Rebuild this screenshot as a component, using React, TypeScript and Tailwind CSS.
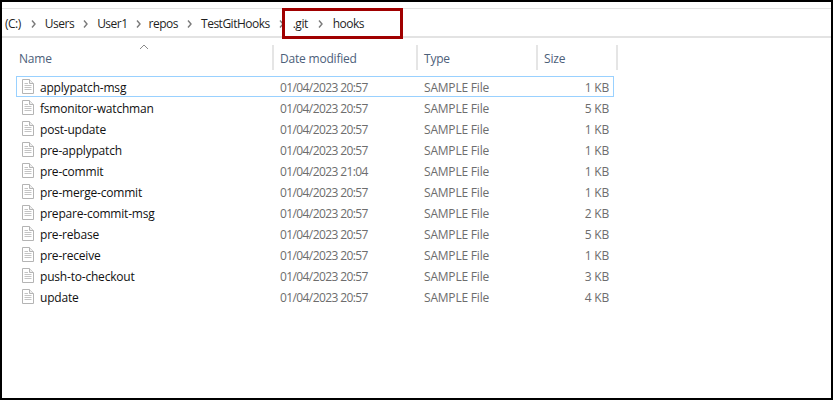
const files: [string, string, string][] = [
  ["applypatch-msg", "01/04/2023 20:57", "1 KB"],
  ["fsmonitor-watchman", "01/04/2023 20:57", "5 KB"],
  ["post-update", "01/04/2023 20:57", "1 KB"],
  ["pre-applypatch", "01/04/2023 20:57", "1 KB"],
  ["pre-commit", "01/04/2023 21:04", "1 KB"],
  ["pre-merge-commit", "01/04/2023 20:57", "1 KB"],
  ["prepare-commit-msg", "01/04/2023 20:57", "2 KB"],
  ["pre-rebase", "01/04/2023 20:57", "5 KB"],
  ["pre-receive", "01/04/2023 20:57", "1 KB"],
  ["push-to-checkout", "01/04/2023 20:57", "3 KB"],
  ["update", "01/04/2023 20:57", "4 KB"],
];

const crumbs: [string, string][] = [
  ["Users", "mx-[9px]"],
  ["User1", "mx-[9px]"],
  ["repos", "mx-[8px]"],
  ["TestGitHooks", "mx-[9px]"],
  [".git", "mx-[9px]"],
  ["hooks", "mx-[10px]"],
];

function Chevron() {
  return (
    <svg width="5" height="8" viewBox="0 0 5 8" className="block shrink-0">
      <path d="M1 0.5 L4 4 L1 7.5" fill="none" stroke="#7a7a7a" strokeWidth="1.4" />
    </svg>
  );
}

function FileIcon() {
  return (
    <svg width="12" height="15" viewBox="0 0 12 15" className="shrink-0 -mt-[2px]">
      <path d="M0.5 0.5 H7.5 L11.5 4.5 V14.5 H0.5 Z" fill="#fff" stroke="#b4b4b4" />
      <path d="M7.5 0.5 V4.5 H11.5" fill="#eee" stroke="#b4b4b4" />
      <path d="M2.5 4.5 H6 M2.5 6.5 H9.5 M2.5 8.5 H9.5 M2.5 10.5 H9.5" stroke="#c4c4c4" />
    </svg>
  );
}

function Head({ label, width }: { label: string; width: string }) {
  return (
    <div className={`${width} h-[25px] flex items-center pl-[6px] pt-[2px] border-r-2 border-[#e5e5e5] text-[#4c607a] tracking-[-0.2px]`}>
      {label}
    </div>
  );
}

export default function App() {
  return (
    <div
      className="relative w-[833px] h-[400px] bg-white border-2 border-black text-[12px] overflow-hidden"
      style={{ fontFamily: '"Open Sans", "Noto Sans", sans-serif' }}
    >
      <div className="mt-[6px] h-[30px] border-t border-b-2 border-t-[#e3e3e3] border-b-[#e3e3e3] flex items-center pl-[3px] pt-[2px] text-[#1f1f1f] tracking-[-0.5px]">
        <span className="mr-[1px]">(C:)</span>
        {crumbs.map(([c, gap]) => (
          <span key={c} className="flex items-center">
            <span className={gap}><Chevron /></span>
            <span>{c}</span>
          </span>
        ))}
      </div>

      <div className="absolute left-[280px] top-[6px] w-[121px] h-[31px] border-[3px] border-[#a00000]" />

      <div className="relative flex pl-[11px] pt-[7px]">
        <svg width="10" height="6" viewBox="0 0 10 6" className="absolute left-[137px] top-[6px]">
          <path d="M1 5 L5 1 L9 5" fill="none" stroke="#8a8a8a" />
        </svg>
        <Head label="Name" width="w-[261px]" />
        <Head label="Date modified" width="w-[144px]" />
        <Head label="Type" width="w-[120px]" />
        <Head label="Size" width="w-[80px]" />
      </div>

      <div className="flex flex-col pl-[14px] pt-[6px]">
        {files.map(([name, date, size], i) => (
          <div
            key={name}
            className={`w-[598px] h-[21px] flex items-center pt-[2px] border ${i === 0 ? "border-[#99d1ff]" : "border-transparent"}`}
          >
            <div className="w-[263px] flex items-center gap-[6px] pl-[5px] text-[#111] tracking-[-0.2px]">
              <FileIcon />
              <span>{name}</span>
            </div>
            <div className="w-[144px] text-[#6d6d6d] tracking-[-0.6px]">{date}</div>
            <div className="w-[120px] text-[#6d6d6d] tracking-[-0.2px]">SAMPLE File</div>
            <div className="w-[65px] text-right text-[#6d6d6d] tracking-[-0.2px]">{size}</div>
          </div>
        ))}
      </div>
    </div>
  );
}
